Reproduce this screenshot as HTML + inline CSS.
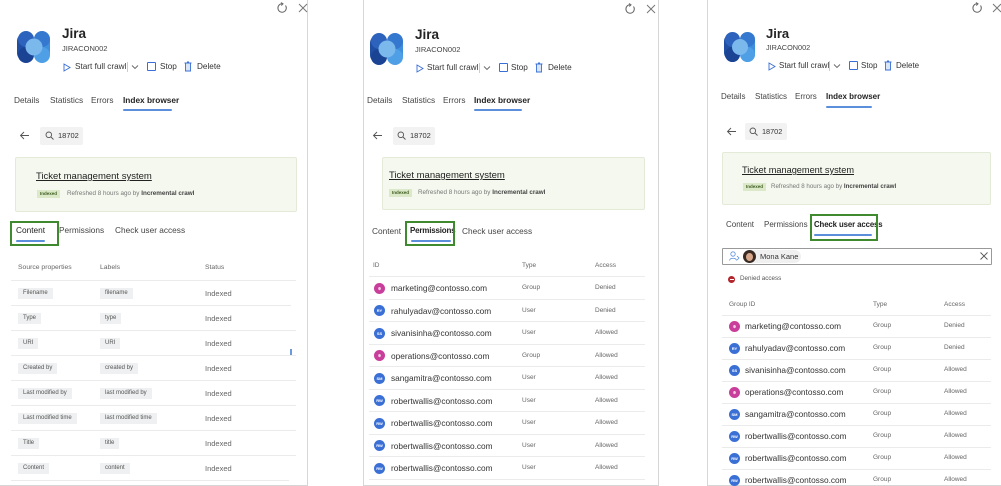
<!DOCTYPE html>
<html><head><meta charset="utf-8"><style>
*{margin:0;padding:0;box-sizing:border-box}
body{width:1001px;height:486px;background:#fff;position:relative;overflow:hidden;font-family:"Liberation Sans",sans-serif;color:#242424}
.a{position:absolute;white-space:nowrap;line-height:1}
.p{position:absolute;border:1px solid #d6d6d6;border-top:none;background:#fff}
.hl{position:absolute;height:1px;background:#ebebeb}
.tag{position:absolute;height:11px;background:#eef0f1;font-size:6px;line-height:11px;padding:0 5px;color:#555;white-space:nowrap}
.st{font-size:7.5px;color:#666}
.av{position:absolute;width:11px;height:11px;border-radius:50%;color:#fff;font-size:4px;line-height:11px;text-align:center;font-weight:bold}
.bl{background:#3a6fd6}.pk{background:#c93d9b}
.em{font-size:8.3px;color:#333}
.sm{font-size:6.5px;color:#666}
.card{position:absolute;background:#f4f8ee;border:1px solid #e3ebd8;border-radius:2px}
.badge{position:absolute;height:8px;background:#dbe9c9;font-size:4.5px;line-height:8px;padding:0 3px;color:#3b5a1e;font-weight:bold}
.ul{position:absolute;height:2px;background:#5b8fdc;border-radius:1px}
.box{position:absolute;border:2px solid #3f8a2e}
</style></head><body>

<div class="p" style="left:-2px;top:-1px;width:310px;height:487px"></div>
<div class="p" style="left:363px;top:-1px;width:296px;height:487px"></div>
<div class="p" style="left:707px;top:-1px;width:300px;height:487px"></div>

<!-- Panel 1 -->
<svg class="a" style="left:276px;top:2px" width="12" height="12" viewBox="0 0 12 12"><path d="M9.5 3.5A4.2 4.2 0 1 1 6 1.8" fill="none" stroke="#666" stroke-width="1"/><path d="M5 0.5L7 1.8 5.3 3.5" fill="none" stroke="#666" stroke-width="1"/></svg>
<svg class="a" style="left:298px;top:3px" width="10" height="10" viewBox="0 0 10 10"><path d="M1 1L9 9M9 1L1 9" stroke="#777" stroke-width="1"/></svg>

<svg class="a" style="left:17px;top:30px" width="34" height="34" viewBox="0 0 34 34"><rect x="0" y="3" width="16" height="28" rx="8" fill="#1f4ea3"/><rect x="17" y="3" width="16" height="28" rx="8" fill="#3f8fdc"/><circle cx="9" cy="9" r="8" fill="#2d63bd"/><circle cx="25" cy="9" r="8" fill="#3478cf"/><circle cx="9" cy="25" r="8" fill="#1a4394"/><circle cx="25" cy="25" r="8" fill="#4f9fe6"/><circle cx="17" cy="17" r="8.5" fill="#7bb8ec"/></svg>
<div class="a" style="left:62px;top:27px;font-size:13.5px;font-weight:bold">Jira</div>
<div class="a" style="left:62px;top:45px;font-size:7.5px;color:#444">JIRACON002</div>
<svg class="a" style="left:63px;top:63px" width="8" height="9" viewBox="0 0 8 9"><path d="M1 1L7 4.5 1 8Z" fill="none" stroke="#3a6fd6" stroke-width="0.9"/></svg>
<div class="a" style="left:75px;top:63px;font-size:8.2px;color:#333">Start full crawl</div>
<div class="a" style="left:127px;top:62px;width:1px;height:10px;background:#ccc"></div>
<svg class="a" style="left:131px;top:64px" width="8" height="6" viewBox="0 0 8 6"><path d="M1 1.5L4 4.5 7 1.5" fill="none" stroke="#666" stroke-width="0.9"/></svg>
<div class="a" style="left:147px;top:62px;width:9px;height:9px;border:1px solid #3a6fd6;border-radius:1px"></div>
<div class="a" style="left:160px;top:63px;font-size:8.2px;color:#333">Stop</div>
<svg class="a" style="left:184px;top:61px" width="8" height="11" viewBox="0 0 8 11"><path d="M0.5 2H7.5M3 1H5M1.5 2V10H6.5V2" fill="#d9e6f7" stroke="#3a6fd6" stroke-width="0.9"/></svg>
<div class="a" style="left:197px;top:63px;font-size:8.2px;color:#333">Delete</div>

<div class="a" style="left:14px;top:96px;font-size:8.3px;color:#444">Details</div>
<div class="a" style="left:50px;top:96px;font-size:8.3px;color:#444">Statistics</div>
<div class="a" style="left:91px;top:96px;font-size:8.3px;color:#444">Errors</div>
<div class="a" style="left:123px;top:96px;font-size:8.3px;font-weight:bold">Index browser</div>
<div class="ul" style="left:123px;top:109px;width:49px"></div>

<svg class="a" style="left:19px;top:131px" width="11" height="9" viewBox="0 0 11 9"><path d="M10 4.5H1.5M5 1L1.5 4.5 5 8" fill="none" stroke="#555" stroke-width="0.9"/></svg>
<div class="a" style="left:40px;top:127px;width:43px;height:18px;background:#f2f2f2;border-radius:2px"></div>
<svg class="a" style="left:45px;top:131px" width="9" height="9" viewBox="0 0 9 9"><circle cx="3.8" cy="3.8" r="2.8" fill="none" stroke="#555" stroke-width="0.9"/><path d="M6 6L8.5 8.5" stroke="#555" stroke-width="0.9"/></svg>
<div class="a" style="left:58px;top:132px;font-size:7.5px;color:#333">18702</div>

<div class="card" style="left:15px;top:157px;width:282px;height:55px"></div>
<div class="a" style="left:36px;top:172px;font-size:9.5px;text-decoration:underline;color:#222">Ticket management system</div>
<div class="badge" style="left:37px;top:190px">Indexed</div>
<div class="a" style="left:67px;top:191px;font-size:6.3px;color:#777">Refreshed 8 hours ago by <b style="color:#444">Incremental crawl</b></div>

<div class="a" style="left:16px;top:226px;font-size:8.3px;color:#222">Content</div>
<div class="ul" style="left:16px;top:240px;width:29px"></div>
<div class="box" style="left:10px;top:221px;width:49px;height:25px"></div>
<div class="a" style="left:59px;top:226px;font-size:8.3px;color:#444">Permissions</div>
<div class="a" style="left:115px;top:226px;font-size:8.3px;color:#444">Check user access</div>

<div class="a st" style="left:18px;top:265px;font-size:6.8px">Source properties</div>
<div class="a st" style="left:100px;top:265px;font-size:6.8px">Labels</div>
<div class="a st" style="left:205px;top:265px;font-size:6.8px">Status</div>
<div class="hl" style="left:11px;top:280px;width:285px"></div>
<div class="tag" style="left:18px;top:288px">Filename</div><div class="tag" style="left:100px;top:288px">filename</div><div class="a st" style="left:205px;top:290px">Indexed</div>
<div class="hl" style="left:11px;top:305px;width:280px"></div>
<div class="tag" style="left:18px;top:313px">Type</div><div class="tag" style="left:100px;top:313px">type</div><div class="a st" style="left:205px;top:315px">Indexed</div>
<div class="hl" style="left:11px;top:330px;width:285px"></div>
<div class="tag" style="left:18px;top:338px">URI</div><div class="tag" style="left:100px;top:338px">URI</div><div class="a st" style="left:205px;top:340px">Indexed</div>
<div class="a" style="left:290px;top:349px;width:2px;height:6px;background:#6a9ad8"></div>
<div class="hl" style="left:11px;top:355px;width:285px"></div>
<div class="tag" style="left:18px;top:363px">Created by</div><div class="tag" style="left:100px;top:363px">created by</div><div class="a st" style="left:205px;top:365px">Indexed</div>
<div class="hl" style="left:11px;top:380px;width:285px"></div>
<div class="tag" style="left:18px;top:388px">Last modified by</div><div class="tag" style="left:100px;top:388px">last modified by</div><div class="a st" style="left:205px;top:390px">Indexed</div>
<div class="hl" style="left:11px;top:405px;width:285px"></div>
<div class="tag" style="left:18px;top:413px">Last modified time</div><div class="tag" style="left:100px;top:413px">last modified time</div><div class="a st" style="left:205px;top:415px">Indexed</div>
<div class="hl" style="left:11px;top:430px;width:285px"></div>
<div class="tag" style="left:18px;top:438px">Title</div><div class="tag" style="left:100px;top:438px">title</div><div class="a st" style="left:205px;top:440px">Indexed</div>
<div class="hl" style="left:11px;top:455px;width:285px"></div>
<div class="tag" style="left:18px;top:463px">Content</div><div class="tag" style="left:100px;top:463px">content</div><div class="a st" style="left:205px;top:465px">Indexed</div>
<div class="hl" style="left:11px;top:480px;width:278px"></div>

<!-- Panel 2 -->
<svg class="a" style="left:624px;top:3px" width="12" height="12" viewBox="0 0 12 12"><path d="M9.5 3.5A4.2 4.2 0 1 1 6 1.8" fill="none" stroke="#666" stroke-width="1"/><path d="M5 0.5L7 1.8 5.3 3.5" fill="none" stroke="#666" stroke-width="1"/></svg>
<svg class="a" style="left:646px;top:4px" width="10" height="10" viewBox="0 0 10 10"><path d="M1 1L9 9M9 1L1 9" stroke="#777" stroke-width="1"/></svg>
<svg class="a" style="left:370px;top:32px" width="34" height="34" viewBox="0 0 34 34"><rect x="0" y="3" width="16" height="28" rx="8" fill="#1f4ea3"/><rect x="17" y="3" width="16" height="28" rx="8" fill="#3f8fdc"/><circle cx="9" cy="9" r="8" fill="#2d63bd"/><circle cx="25" cy="9" r="8" fill="#3478cf"/><circle cx="9" cy="25" r="8" fill="#1a4394"/><circle cx="25" cy="25" r="8" fill="#4f9fe6"/><circle cx="17" cy="17" r="8.5" fill="#7bb8ec"/></svg>
<div class="a" style="left:415px;top:28px;font-size:13.5px;font-weight:bold">Jira</div>
<div class="a" style="left:415px;top:46px;font-size:7.5px;color:#444">JIRACON002</div>
<svg class="a" style="left:416px;top:64px" width="8" height="9" viewBox="0 0 8 9"><path d="M1 1L7 4.5 1 8Z" fill="none" stroke="#3a6fd6" stroke-width="0.9"/></svg>
<div class="a" style="left:427px;top:64px;font-size:8.2px;color:#333">Start full crawl</div>
<div class="a" style="left:479px;top:63px;width:1px;height:10px;background:#ccc"></div>
<svg class="a" style="left:483px;top:65px" width="8" height="6" viewBox="0 0 8 6"><path d="M1 1.5L4 4.5 7 1.5" fill="none" stroke="#666" stroke-width="0.9"/></svg>
<div class="a" style="left:499px;top:63px;width:9px;height:9px;border:1px solid #3a6fd6;border-radius:1px"></div>
<div class="a" style="left:511px;top:64px;font-size:8.2px;color:#333">Stop</div>
<svg class="a" style="left:535px;top:62px" width="8" height="11" viewBox="0 0 8 11"><path d="M0.5 2H7.5M3 1H5M1.5 2V10H6.5V2" fill="#d9e6f7" stroke="#3a6fd6" stroke-width="0.9"/></svg>
<div class="a" style="left:548px;top:64px;font-size:8.2px;color:#333">Delete</div>

<div class="a" style="left:367px;top:96px;font-size:8.3px;color:#444">Details</div>
<div class="a" style="left:402px;top:96px;font-size:8.3px;color:#444">Statistics</div>
<div class="a" style="left:443px;top:96px;font-size:8.3px;color:#444">Errors</div>
<div class="a" style="left:474px;top:96px;font-size:8.3px;font-weight:bold">Index browser</div>
<div class="ul" style="left:474px;top:109px;width:48px"></div>

<svg class="a" style="left:372px;top:131px" width="11" height="9" viewBox="0 0 11 9"><path d="M10 4.5H1.5M5 1L1.5 4.5 5 8" fill="none" stroke="#555" stroke-width="0.9"/></svg>
<div class="a" style="left:393px;top:127px;width:42px;height:18px;background:#f2f2f2;border-radius:2px"></div>
<svg class="a" style="left:397px;top:131px" width="9" height="9" viewBox="0 0 9 9"><circle cx="3.8" cy="3.8" r="2.8" fill="none" stroke="#555" stroke-width="0.9"/><path d="M6 6L8.5 8.5" stroke="#555" stroke-width="0.9"/></svg>
<div class="a" style="left:410px;top:132px;font-size:7.5px;color:#333">18702</div>

<div class="card" style="left:382px;top:157px;width:263px;height:53px"></div>
<div class="a" style="left:389px;top:171px;font-size:9.5px;text-decoration:underline;color:#222">Ticket management system</div>
<div class="badge" style="left:389px;top:189px">Indexed</div>
<div class="a" style="left:418px;top:190px;font-size:6.3px;color:#777">Refreshed 8 hours ago by <b style="color:#444">Incremental crawl</b></div>

<div class="a" style="left:372px;top:227px;font-size:8.3px;color:#444">Content</div>
<div class="a" style="left:410px;top:227px;font-size:8px;font-weight:bold;color:#222;letter-spacing:-0.2px">Permissions</div>
<div class="ul" style="left:411px;top:240px;width:40px"></div>
<div class="box" style="left:405px;top:221px;width:50px;height:25px"></div>
<div class="a" style="left:462px;top:227px;font-size:8.3px;color:#444">Check user access</div>

<div class="a sm" style="left:373px;top:263px">ID</div>
<div class="a sm" style="left:522px;top:263px">Type</div>
<div class="a sm" style="left:595px;top:263px">Access</div>
<div class="hl" style="left:369px;top:276px;width:276px"></div>
<div class="av pk" style="left:374px;top:283px">✲</div><div class="a em" style="left:391px;top:284px">marketing@contosso.com</div><div class="a sm" style="left:522px;top:285px">Group</div><div class="a sm" style="left:595px;top:285px">Denied</div>
<div class="hl" style="left:369px;top:299px;width:276px"></div>
<div class="av bl" style="left:374px;top:305px">RY</div><div class="a em" style="left:391px;top:307px">rahulyadav@contosso.com</div><div class="a sm" style="left:522px;top:308px">User</div><div class="a sm" style="left:595px;top:308px">Denied</div>
<div class="hl" style="left:369px;top:321px;width:276px"></div>
<div class="av bl" style="left:374px;top:328px">SS</div><div class="a em" style="left:391px;top:329px">sivanisinha@contosso.com</div><div class="a sm" style="left:522px;top:330px">User</div><div class="a sm" style="left:595px;top:330px">Allowed</div>
<div class="hl" style="left:369px;top:344px;width:276px"></div>
<div class="av pk" style="left:374px;top:350px">✲</div><div class="a em" style="left:391px;top:352px">operations@contosso.com</div><div class="a sm" style="left:522px;top:353px">Group</div><div class="a sm" style="left:595px;top:353px">Allowed</div>
<div class="hl" style="left:369px;top:366px;width:276px"></div>
<div class="av bl" style="left:374px;top:373px">SM</div><div class="a em" style="left:391px;top:374px">sangamitra@contosso.com</div><div class="a sm" style="left:522px;top:375px">User</div><div class="a sm" style="left:595px;top:375px">Allowed</div>
<div class="hl" style="left:369px;top:389px;width:276px"></div>
<div class="av bl" style="left:374px;top:395px">RW</div><div class="a em" style="left:391px;top:397px">robertwallis@contosso.com</div><div class="a sm" style="left:522px;top:398px">User</div><div class="a sm" style="left:595px;top:398px">Allowed</div>
<div class="hl" style="left:369px;top:411px;width:276px"></div>
<div class="av bl" style="left:374px;top:418px">RW</div><div class="a em" style="left:391px;top:419px">robertwallis@contosso.com</div><div class="a sm" style="left:522px;top:420px">User</div><div class="a sm" style="left:595px;top:420px">Allowed</div>
<div class="hl" style="left:369px;top:434px;width:276px"></div>
<div class="av bl" style="left:374px;top:440px">RW</div><div class="a em" style="left:391px;top:442px">robertwallis@contosso.com</div><div class="a sm" style="left:522px;top:443px">User</div><div class="a sm" style="left:595px;top:443px">Allowed</div>
<div class="hl" style="left:369px;top:456px;width:276px"></div>
<div class="av bl" style="left:374px;top:463px">RW</div><div class="a em" style="left:391px;top:464px">robertwallis@contosso.com</div><div class="a sm" style="left:522px;top:465px">User</div><div class="a sm" style="left:595px;top:465px">Allowed</div>
<div class="hl" style="left:369px;top:479px;width:276px"></div>

<!-- Panel 3 -->
<svg class="a" style="left:971px;top:2px" width="12" height="12" viewBox="0 0 12 12"><path d="M9.5 3.5A4.2 4.2 0 1 1 6 1.8" fill="none" stroke="#666" stroke-width="1"/><path d="M5 0.5L7 1.8 5.3 3.5" fill="none" stroke="#666" stroke-width="1"/></svg>
<svg class="a" style="left:992px;top:3px" width="10" height="10" viewBox="0 0 10 10"><path d="M1 1L9 9M9 1L1 9" stroke="#777" stroke-width="1"/></svg>
<svg class="a" style="left:724px;top:31px" width="32" height="32" viewBox="0 0 34 34"><rect x="0" y="3" width="16" height="28" rx="8" fill="#1f4ea3"/><rect x="17" y="3" width="16" height="28" rx="8" fill="#3f8fdc"/><circle cx="9" cy="9" r="8" fill="#2d63bd"/><circle cx="25" cy="9" r="8" fill="#3478cf"/><circle cx="9" cy="25" r="8" fill="#1a4394"/><circle cx="25" cy="25" r="8" fill="#4f9fe6"/><circle cx="17" cy="17" r="8.5" fill="#7bb8ec"/></svg>
<div class="a" style="left:766px;top:27px;font-size:13px;font-weight:bold">Jira</div>
<div class="a" style="left:766px;top:44px;font-size:7.3px;color:#444">JIRACON002</div>
<svg class="a" style="left:768px;top:62px" width="8" height="9" viewBox="0 0 8 9"><path d="M1 1L7 4.5 1 8Z" fill="none" stroke="#3a6fd6" stroke-width="0.9"/></svg>
<div class="a" style="left:779px;top:62px;font-size:8px;color:#333">Start full crawl</div>
<div class="a" style="left:829px;top:61px;width:1px;height:10px;background:#ccc"></div>
<svg class="a" style="left:833px;top:63px" width="8" height="6" viewBox="0 0 8 6"><path d="M1 1.5L4 4.5 7 1.5" fill="none" stroke="#666" stroke-width="0.9"/></svg>
<div class="a" style="left:849px;top:61px;width:9px;height:9px;border:1px solid #3a6fd6;border-radius:1px"></div>
<div class="a" style="left:861px;top:62px;font-size:8px;color:#333">Stop</div>
<svg class="a" style="left:884px;top:60px" width="8" height="11" viewBox="0 0 8 11"><path d="M0.5 2H7.5M3 1H5M1.5 2V10H6.5V2" fill="#d9e6f7" stroke="#3a6fd6" stroke-width="0.9"/></svg>
<div class="a" style="left:896px;top:62px;font-size:8px;color:#333">Delete</div>

<div class="a" style="left:721px;top:93px;font-size:8px;color:#444">Details</div>
<div class="a" style="left:755px;top:93px;font-size:8px;color:#444">Statistics</div>
<div class="a" style="left:795px;top:93px;font-size:8px;color:#444">Errors</div>
<div class="a" style="left:826px;top:93px;font-size:8px;font-weight:bold">Index browser</div>
<div class="ul" style="left:826px;top:106px;width:46px"></div>

<svg class="a" style="left:726px;top:127px" width="11" height="9" viewBox="0 0 11 9"><path d="M10 4.5H1.5M5 1L1.5 4.5 5 8" fill="none" stroke="#555" stroke-width="0.9"/></svg>
<div class="a" style="left:745px;top:123px;width:42px;height:17px;background:#f2f2f2;border-radius:2px"></div>
<svg class="a" style="left:749px;top:127px" width="9" height="9" viewBox="0 0 9 9"><circle cx="3.8" cy="3.8" r="2.8" fill="none" stroke="#555" stroke-width="0.9"/><path d="M6 6L8.5 8.5" stroke="#555" stroke-width="0.9"/></svg>
<div class="a" style="left:762px;top:128px;font-size:7.3px;color:#333">18702</div>

<div class="card" style="left:722px;top:152px;width:269px;height:53px"></div>
<div class="a" style="left:742px;top:166px;font-size:9.2px;text-decoration:underline;color:#222">Ticket management system</div>
<div class="badge" style="left:743px;top:183px">Indexed</div>
<div class="a" style="left:771px;top:184px;font-size:6.2px;color:#777">Refreshed 8 hours ago by <b style="color:#444">Incremental crawl</b></div>

<div class="a" style="left:726px;top:221px;font-size:8px;color:#444">Content</div>
<div class="a" style="left:764px;top:221px;font-size:8px;color:#444">Permissions</div>
<div class="a" style="left:814px;top:221px;font-size:7.8px;font-weight:bold;color:#222;letter-spacing:-0.1px">Check user access</div>
<div class="ul" style="left:814px;top:234px;width:58px"></div>
<div class="box" style="left:810px;top:214px;width:68px;height:27px"></div>

<div class="a" style="left:722px;top:248px;width:270px;height:17px;border:1px solid #999;border-radius:1px"></div>
<svg class="a" style="left:729px;top:251px" width="11" height="10" viewBox="0 0 11 10"><circle cx="4" cy="3" r="2.2" fill="none" stroke="#5b8fdc" stroke-width="0.8"/><path d="M0.5 9.5C1 6.5 7 6.5 7.5 9.5M8 5L10 7 8 9" fill="none" stroke="#5b8fdc" stroke-width="0.8"/></svg>
<div class="a" style="left:743px;top:250px;width:58px;height:13px;background:#f0f0f0;border-radius:7px"></div>
<div class="a" style="left:743px;top:250px;width:13px;height:13px;border-radius:50%;background:#3a2a24"></div>
<div class="a" style="left:746px;top:253px;width:7px;height:8px;border-radius:50%;background:#d8a88c"></div>
<div class="a" style="left:760px;top:253px;font-size:7.5px;color:#333">Mona Kane</div>
<svg class="a" style="left:980px;top:252px" width="8" height="8" viewBox="0 0 8 8"><path d="M0.5 0.5L7.5 7.5M7.5 0.5L0.5 7.5" stroke="#555" stroke-width="0.9"/></svg>

<div class="a" style="left:728px;top:276px;width:7px;height:7px;border-radius:50%;background:#b3262b"></div>
<div class="a" style="left:729.5px;top:279px;width:4px;height:1px;background:#fff"></div>
<div class="a" style="left:740px;top:276px;font-size:6.3px;color:#555">Denied access</div>

<div class="a sm" style="left:729px;top:302px">Group ID</div>
<div class="a sm" style="left:873px;top:302px">Type</div>
<div class="a sm" style="left:944px;top:302px">Access</div>
<div class="hl" style="left:722px;top:315px;width:269px"></div>
<div class="av pk" style="left:729px;top:321px">✲</div><div class="a em" style="left:745px;top:322px">marketing@contosso.com</div><div class="a sm" style="left:873px;top:323px">Group</div><div class="a sm" style="left:944px;top:323px">Denied</div>
<div class="hl" style="left:722px;top:337px;width:269px"></div>
<div class="av bl" style="left:729px;top:343px">RY</div><div class="a em" style="left:745px;top:344px">rahulyadav@contosso.com</div><div class="a sm" style="left:873px;top:345px">Group</div><div class="a sm" style="left:944px;top:345px">Denied</div>
<div class="hl" style="left:722px;top:359px;width:269px"></div>
<div class="av bl" style="left:729px;top:365px">SS</div><div class="a em" style="left:745px;top:366px">sivanisinha@contosso.com</div><div class="a sm" style="left:873px;top:367px">Group</div><div class="a sm" style="left:944px;top:367px">Allowed</div>
<div class="hl" style="left:722px;top:381px;width:269px"></div>
<div class="av pk" style="left:729px;top:387px">✲</div><div class="a em" style="left:745px;top:388px">operations@contosso.com</div><div class="a sm" style="left:873px;top:389px">Group</div><div class="a sm" style="left:944px;top:389px">Allowed</div>
<div class="hl" style="left:722px;top:403px;width:269px"></div>
<div class="av bl" style="left:729px;top:409px">SM</div><div class="a em" style="left:745px;top:410px">sangamitra@contosso.com</div><div class="a sm" style="left:873px;top:411px">Group</div><div class="a sm" style="left:944px;top:411px">Allowed</div>
<div class="hl" style="left:722px;top:425px;width:269px"></div>
<div class="av bl" style="left:729px;top:431px">RW</div><div class="a em" style="left:745px;top:432px">robertwallis@contosso.com</div><div class="a sm" style="left:873px;top:433px">Group</div><div class="a sm" style="left:944px;top:433px">Allowed</div>
<div class="hl" style="left:722px;top:447px;width:269px"></div>
<div class="av bl" style="left:729px;top:453px">RW</div><div class="a em" style="left:745px;top:454px">robertwallis@contosso.com</div><div class="a sm" style="left:873px;top:455px">Group</div><div class="a sm" style="left:944px;top:455px">Allowed</div>
<div class="hl" style="left:722px;top:469px;width:269px"></div>
<div class="av bl" style="left:729px;top:475px">RW</div><div class="a em" style="left:745px;top:476px">robertwallis@contosso.com</div><div class="a sm" style="left:873px;top:477px">Group</div><div class="a sm" style="left:944px;top:477px">Allowed</div>

</body></html>
